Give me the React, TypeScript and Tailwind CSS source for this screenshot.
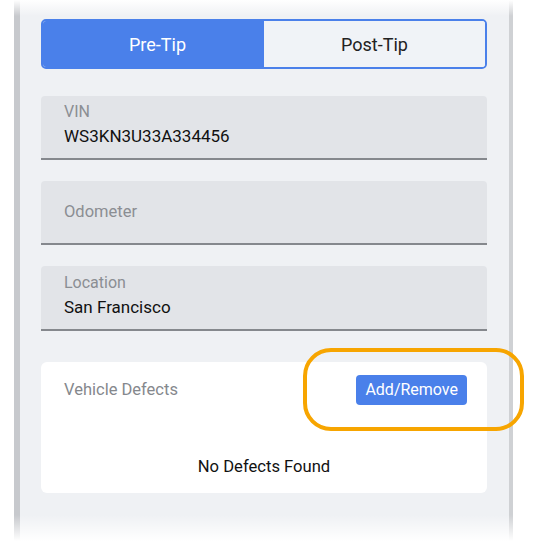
import React from "react";

export default function App() {
  const font = { fontFamily: "Roboto, 'Liberation Sans', sans-serif" };
  return (
    <div className="relative w-[533px] h-[541px] bg-white overflow-hidden" style={font}>
      <div className="ml-[14px] w-[499px] h-[541px] border-l-[6px] border-r-[4px] border-l-[#c7c9cd] border-r-[#cfd1d4] bg-[#eff1f4] pl-[21px] pr-[22px] pt-[19px] flex flex-col">
        <div className="grid grid-cols-2 h-[50px] rounded-[5px] overflow-hidden border-2 border-[#4a80ea]">
          <div className="bg-[#4a80ea] text-white text-[18px] flex items-center justify-center">
            <span className="translate-x-[4px]">Pre-Tip</span>
          </div>
          <div className="bg-[#f0f3f7] text-[#222] text-[18px] flex items-center justify-center">Post-Tip</div>
        </div>
        <div className="mt-[27px] h-[64px] bg-[#e2e4e8] rounded-t-[4px] border-b-2 border-[#85888d] px-[23px] pt-[6px]">
          <div className="text-[16px] text-[#8b8e93] leading-[20px]">VIN</div>
          <div className="text-[17px] text-[#111] leading-[22px] mt-[3px]">WS3KN3U33A334456</div>
        </div>
        <div className="mt-[21px] h-[64px] bg-[#e2e4e8] rounded-t-[4px] border-b-2 border-[#85888d] px-[23px] flex items-center">
          <div className="text-[16.5px] text-[#8b8e93]">Odometer</div>
        </div>
        <div className="mt-[21px] h-[65px] bg-[#e2e4e8] rounded-t-[4px] border-b-2 border-[#85888d] px-[23px] pt-[7px]">
          <div className="text-[16px] text-[#8b8e93] leading-[20px]">Location</div>
          <div className="text-[17px] text-[#111] leading-[22px] mt-[3px]">San Francisco</div>
        </div>
        <div className="mt-[31px] h-[131px] bg-white rounded-[6px] px-[23px] pt-[13px] flex flex-col">
          <div className="flex items-center justify-between">
            <div className="text-[16.5px] text-[#85888d]">Vehicle Defects</div>
            <div className="h-[30px] px-[9px] bg-[#4a80ea] text-white text-[16px] rounded-[4px] flex items-center mr-[-3px]">Add/Remove</div>
          </div>
          <div className="mt-[50px] text-center text-[16.6px] text-[#111]">No Defects Found</div>
        </div>
      </div>
      <div className="absolute left-0 right-0 top-0 h-[16px] bg-gradient-to-b from-white to-transparent pointer-events-none" />
      <div className="absolute left-0 right-0 bottom-0 h-[26px] bg-gradient-to-t from-white to-transparent pointer-events-none" />
      <div className="absolute left-[303px] top-[348px] w-[221px] h-[83px] rounded-[28px] border-4 border-[#f7a500] pointer-events-none" />
    </div>
  );
}
